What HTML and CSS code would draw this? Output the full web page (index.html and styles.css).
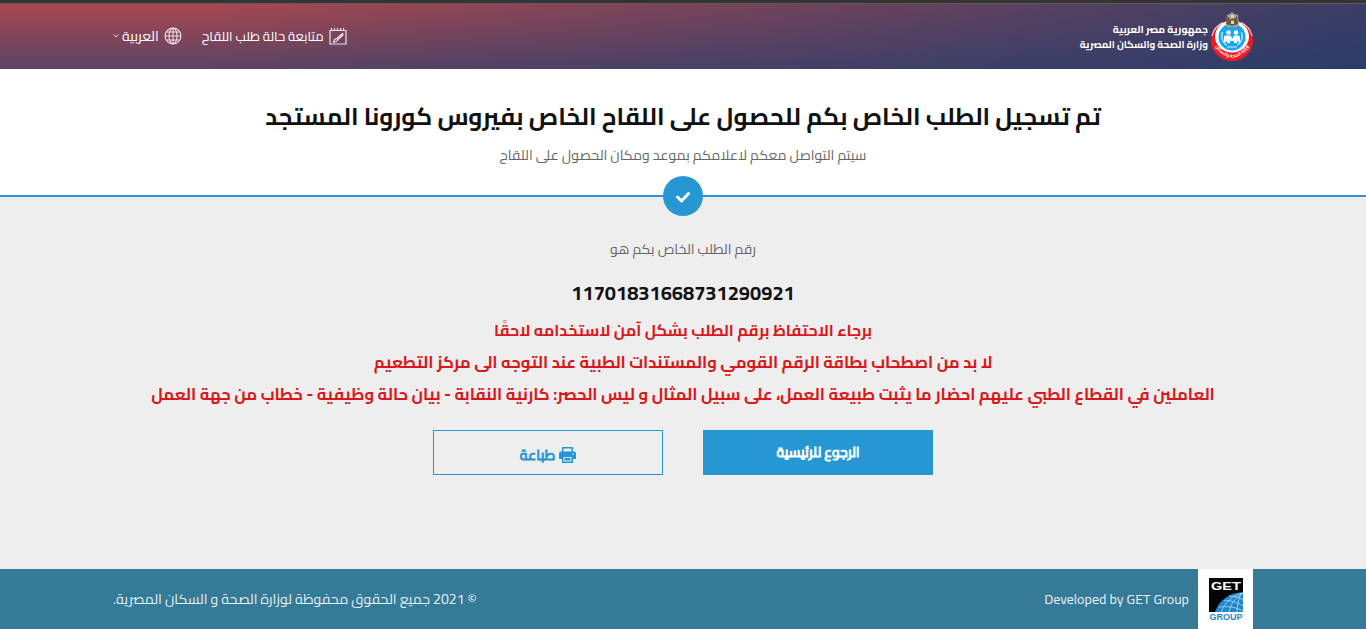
FILE: index.html
```
<!DOCTYPE html>
<html lang="ar" dir="rtl">
<head>
<meta charset="utf-8">
<title>تسجيل لقاح كورونا</title>
<link rel="stylesheet" href="styles.css">
</head>
<body>
<header class="header">
  <div class="container bar">
    <a class="brand">
      <svg class="emblem" viewBox="0 0 42 50">
        <ellipse cx="21" cy="28.500" rx="21" ry="20.500" fill="#f01a22"/>
        <path d="M1 24A20 19 0 0 1 12 10.500M41 24A20 19 0 0 0 30 10.500" fill="none" stroke="#f5d5da" stroke-width="1.200"/>
        <ellipse cx="21" cy="24.500" rx="17" ry="16" fill="#fff"/>
        <circle cx="21" cy="25" r="13.500" fill="#18a5f2"/>
        <path d="M11.500 20c-2 6 0 10 4 13M30.500 20c2 6 0 10-4 13M16 35h10" fill="none" stroke="#d8f0fc" stroke-width="1.200"/>
        <circle cx="17.500" cy="20.500" r="2.300" fill="#fff"/><circle cx="25" cy="20.500" r="2.300" fill="#fff"/>
        <path d="M15 23.500h12c1.500 0 2 1 2 2V30h-2v-3l-1 4h-3v-2h-4v2h-3l-1-4v3h-2v-4.500c0-1 0-2 2-2z" fill="#fff"/>
        <path d="M19.500 23h3.500l-1.700 4z" fill="#18a5f2"/>
        <path id="motto" d="M3 33Q21 58 39 33" fill="none"/>
        <text class="motto" text-anchor="middle"><textPath href="#motto" startOffset="50%">وزارة الصحة والسكان</textPath></text>
        <path d="M16 3l3-1 2-2 2 2 4 1 1 11-3 1h-8l-2-1z" fill="#aaa294"/>
        <path d="M16 4l5 5 5-5 1 8-6 2-6-2z" fill="#62603a"/>
        <path d="M20 3h3v9h-3z" fill="#ddd6c5"/><path d="M20 6h3v3h-3z" fill="#9b6947"/>
      </svg>
      <span class="brand-text"><span class="brand-line brand-country">جمهورية مصر العربية</span><span class="brand-line brand-ministry">وزارة الصحة والسكان المصرية</span></span>
    </a>
    <nav class="nav">
      <a class="nav-link">
        <svg class="nav-icon" viewBox="0 0 18 18" fill="none" stroke="#f0dfe3" stroke-width="1.200"><path d="M1 3.500h16v13.500H1zM2.500 1v3M5.500 1v3M8.500 1v3M11.500 1v3M14.500 1v3"/><path d="M13.500 6.500l-6 5.500M14.500 7.500l-6 5.500M13.500 6.500l1 1M8 11.500l-2.500 1-1 2.500 3-.5 1.500-2"/></svg>
        <span>متابعة حالة طلب اللقاح</span>
      </a>
      <a class="nav-link">
        <svg class="nav-icon" viewBox="0 0 18 18" fill="none" stroke="#f0dfe3" stroke-width="1.100"><circle cx="9" cy="9" r="7.900"/><ellipse cx="9" cy="9" rx="4" ry="7.900"/><path d="M9 1v16M1 9h16M2.500 5h13M2.500 13h13"/></svg>
        <span class="language">العربية</span>
        <svg class="caret" viewBox="0 0 6 4" fill="none" stroke="#e8d5da"><path d="M.5.500L3 3 5.500.500"/></svg>
      </a>
    </nav>
  </div>
</header>
<section class="hero">
  <h1 class="title">تم تسجيل الطلب الخاص بكم للحصول على اللقاح الخاص بفيروس كورونا المستجد</h1>
  <p class="subtitle">سيتم التواصل معكم لاعلامكم بموعد ومكان الحصول على اللقاح</p>
  <div class="check"><svg viewBox="0 0 16 12" fill="none" stroke="#fff" stroke-width="3" stroke-linecap="round" stroke-linejoin="round"><path d="M2.500 6l4 4 7-7.500"/></svg></div>
</section>
<main class="main">
  <p class="label">رقم الطلب الخاص بكم هو</p>
  <p class="number">11701831668731290921</p>
  <p class="warn warn-first">برجاء الاحتفاظ برقم الطلب بشكل آمن لاستخدامه لاحقًا</p>
  <p class="warn">لا بد من اصطحاب بطاقة الرقم القومي والمستندات الطبية عند التوجه الى مركز التطعيم</p>
  <p class="warn">العاملين في القطاع الطبي عليهم احضار ما يثبت طبيعة العمل، على سبيل المثال و ليس الحصر: كارنية النقابة - بيان حالة وظيفية - خطاب من جهة العمل</p>
  <div class="actions">
    <a class="btn btn-primary">الرجوع للرئيسية</a>
    <a class="btn btn-outline"><svg class="printer" viewBox="0 0 17 16"><path fill="#2697d3" d="M3 0h11v4.500h1a2 2 0 0 1 2 2V12h-3v4H3v-4H0V6.500a2 2 0 0 1 2-2h1zM4.500 1.500v3h8v-3zM4.500 10v4.500h8V10z" fill-rule="evenodd"/><path d="M5.500 12.200h6" stroke="#2697d3" stroke-width="2.600"/><circle cx="14" cy="7.200" r=".7" fill="#eee"/></svg><span>طباعة</span></a>
  </div>
</main>
<footer class="footer">
  <div class="container foot">
    <div class="developer">
      <div class="get-logo"><svg viewBox="0 0 34 42" direction="ltr">
        <path d="M0 0h34v34H0z" fill="#050505"/>
        <path d="M6 34C10 22 20 15 34 14v20z" fill="#2187cc"/>
        <path d="M12 34C16 25 23 17 34 15M20 34C22 25 27 19 34 15M28 34c0-7 2-13 4-19M15 23c6-1 13 1 19 5M20 18c5 0 10 1 14 4M10 29c9-1 17 0 24 4" fill="none" stroke="#c9e6f7" stroke-width=".7"/>
        <text x="2" y="11.500" class="get" textLength="30" lengthAdjust="spacingAndGlyphs">GET</text>
        <text x=".5" y="41.500" class="group" textLength="33" lengthAdjust="spacingAndGlyphs">GROUP</text>
      </svg></div>
      <span dir="ltr">Developed by GET Group</span>
    </div>
    <span class="copy">© 2021 جميع الحقوق محفوظة لوزارة الصحة و السكان المصرية.</span>
  </div>
</footer>
</body>
</html>
```
FILE: styles.css
```
* { box-sizing: border-box; }
body { margin: 0; height: 629px; overflow: hidden; display: flex; flex-direction: column; background: #eee; font-family: Cairo, "Noto Sans Arabic", "DejaVu Sans", sans-serif; font-size: 14px; }
p, h1 { margin: 0; }
span, p, h1 { white-space: nowrap; }
.container { width: 1140px; margin: 0 auto; display: flex; justify-content: space-between; }
.header { height: 69px; flex: none; border-top: 3px solid #343434; background: linear-gradient(to right, rgba(31, 59, 108, 0) 15%, rgba(31, 59, 108, .8)), linear-gradient(#a9484f, #5b4364); box-shadow: inset 0 1px #66575a; color: #fff; }
.bar { height: 66px; align-items: center; }
.brand { display: flex; align-items: center; gap: 3px; }
.emblem { width: 42px; height: 50px; margin-top: 1px; overflow: visible; }
.motto { font-size: 4.5px; font-weight: bold; fill: #fff; }
.brand-text { display: flex; flex-direction: column; margin-top: 2px; font-weight: bold; }
.brand-line { line-height: 15px; }
.brand-country { font-size: 10.3px; }
.brand-ministry { font-size: 9.85px; }
.nav { display: flex; gap: 20px; }
.nav-link { display: flex; align-items: center; gap: 5px; font-size: 13px; }
.nav-link:first-child { font-size: 13.1px; }
.nav-icon { width: 18px; height: 18px; }
.language { font-size: 14px; margin-left: -2px; }
.caret { width: 6px; height: 4px; }
.hero { height: 128px; flex: none; display: flex; flex-direction: column; align-items: center; background: #fff; border-bottom: 2px solid #2697d3; }
.title { margin-top: 24px; height: 48px; line-height: 48px; font-size: 24.15px; color: #111; }
.subtitle { flex: none; height: 35px; line-height: 28px; color: #666; }
.check { flex: none; width: 40px; height: 40px; margin-bottom: -24px; border-radius: 50%; background: #2697d3; display: flex; align-items: center; justify-content: center; z-index: 1; }
.title { flex: none; }
.check { position: relative; top: 0; }
.check svg { width: 16px; height: 12px; margin-top: 2px; }
.main { flex: 1; display: flex; flex-direction: column; align-items: center; padding-top: 37px; }
.label { line-height: 30px; color: #666; }
.number { margin-top: 14px; font-size: 20.1px; font-weight: bold; line-height: 30px; color: #111; }
.warn { height: 32px; line-height: 32px; font-size: 16.45px; font-weight: bold; color: #d9181c; }
.warn-first { margin-top: 6px; font-size: 16px; }
.actions { display: flex; gap: 40px; margin-top: 20px; }
.btn { width: 230px; height: 45px; display: flex; align-items: center; justify-content: center; gap: 4px; font-size: 14px; font-weight: 500; -webkit-text-stroke: .8px currentColor; border: 1px solid #2697d3; }
.btn-primary { background: #2697d3; color: #fff; padding-bottom: 2px; font-size: 13.8px; }
.btn-outline { color: #2697d3; padding-top: 4px; }
.printer { width: 17px; height: 16px; }
.footer { height: 60px; flex: none; background: #357b98; color: #e4eff3; }
.foot { height: 60px; align-items: center; }
.developer { display: flex; align-items: center; gap: 9px; }
.get-logo { width: 55px; height: 60px; background: #fff; display: flex; align-items: center; justify-content: center; }
.get-logo svg { width: 34px; height: 42px; direction: ltr; }
.get { font: bold 11.5px "Liberation Sans", sans-serif; fill: #fff; }
.group { font: bold 9px "Liberation Sans", sans-serif; fill: #2187cc; }
.copy { font-size: 14.05px; }
```
